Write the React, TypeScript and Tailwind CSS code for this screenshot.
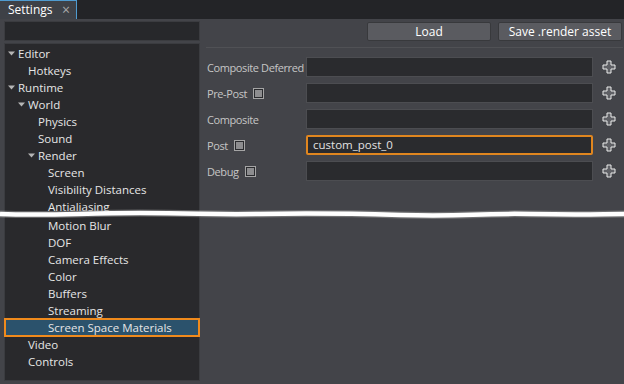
type TreeItem = { label: string; level: number; arrow?: boolean; selected?: boolean; gapBefore?: boolean };

const tree: TreeItem[] = [
  { label: 'Editor', level: 0, arrow: true },
  { label: 'Hotkeys', level: 1 },
  { label: 'Runtime', level: 0, arrow: true },
  { label: 'World', level: 1, arrow: true },
  { label: 'Physics', level: 2 },
  { label: 'Sound', level: 2 },
  { label: 'Render', level: 2, arrow: true },
  { label: 'Screen', level: 3 },
  { label: 'Visibility Distances', level: 3 },
  { label: 'Antialiasing', level: 3 },
  { label: 'Motion Blur', level: 3, gapBefore: true },
  { label: 'DOF', level: 3 },
  { label: 'Camera Effects', level: 3 },
  { label: 'Color', level: 3 },
  { label: 'Buffers', level: 3 },
  { label: 'Streaming', level: 3 },
  { label: 'Screen Space Materials', level: 3, selected: true },
  { label: 'Video', level: 1 },
  { label: 'Controls', level: 1 },
];

const indents = ['pl-[1px]', 'pl-[11px]', 'pl-[21px]', 'pl-[31px]'];

const rows = [
  { label: 'Composite Deferred', check: false, value: '' },
  { label: 'Pre-Post', check: true, value: '' },
  { label: 'Composite', check: false, value: '' },
  { label: 'Post', check: true, value: 'custom_post_0', active: true },
  { label: 'Debug', check: true, value: '' },
];

const Arrow = () => (
  <svg width="12" height="17" viewBox="0 0 12 17" className="shrink-0">
    <path d="M2 6.5 L9 6.5 L5.5 10.5 Z" fill="#b5b5b5" />
  </svg>
);

const Plus = () => (
  <svg width="14" height="14" viewBox="0 0 14 14">
    <path
      d="M5 1 H9 V5 H13 V9 H9 V13 H5 V9 H1 V5 H5 Z"
      fill="#5f6065"
      stroke="#ececec"
      strokeWidth="1"
    />
  </svg>
);

const Check = () => (
  <span className="inline-flex w-[11px] h-[11px] border border-[#a5a5a5] bg-[#2a2b2e] items-center justify-center">
    <span className="w-[7px] h-[7px] bg-[#8d8d8f]" />
  </span>
);

const App = () => {
  return (
    <div className="relative w-[624px] h-[384px] overflow-hidden bg-[#434449] font-['Open_Sans',sans-serif] text-[11.5px] leading-none">
      <div className="h-[19px] bg-[#232427] flex">
        <div className="w-[77px] h-[19px] bg-[#3e4147] border-t border-r border-[#4f9bd0] flex items-center pl-[8px] pr-[6px] justify-between">
          <span className="text-white text-[12px]">Settings</span>
          <span className="text-[#a8a8a8] text-[14px]">×</span>
        </div>
      </div>

      <div className="flex">
        <div className="w-[196px] ml-[4px] mt-[2px] shrink-0">
          <div className="h-[20px] bg-[#27282b] border border-[#3b3c40]" />
          <div className="mt-[2px] h-[338px] bg-[#29292c] border border-[#3b3c40] pt-[1px] text-[#e6e6e6]">
            {tree.map((t) => (
              <div
                key={t.label}
                className={`h-[17px] flex items-center ${t.gapBefore ? 'mt-[2px]' : ''} ${t.selected ? 'bg-[#2b526c] outline-2 outline-[#f08a1c] -outline-offset-1' : ''}`}
              >
                <div className={`flex items-center ${indents[t.level]}`}>
                  {t.arrow ? <Arrow /> : <span className="w-[12px] shrink-0" />}
                  <span>{t.label}</span>
                </div>
              </div>
            ))}
          </div>
        </div>

        <div className="flex-1 pl-[6px] pr-[4px] pt-[3px]">
          <div className="flex justify-end gap-[7px] pr-[1px]">
            <button className="w-[124px] h-[19px] bg-[#5a5b60] border border-[#38393c] rounded-[2px] text-white text-[12px]">Load</button>
            <button className="w-[124px] h-[19px] bg-[#5a5b60] border border-[#38393c] rounded-[2px] text-white text-[12px]">Save .render asset</button>
          </div>
          <div className="mt-[6px] h-px bg-[#505155]" />
          <div className="mt-[9px] flex flex-col gap-[6px]">
            {rows.map((r) => (
              <div key={r.label} className="flex items-center h-[20px]">
                <div className="w-[100px] shrink-0 flex items-center gap-[6px] pl-[1px] text-[#c6c6c6] text-[11px] tracking-[-0.4px] whitespace-nowrap">
                  <span>{r.label}</span>
                  {r.check && <Check />}
                </div>
                <div
                  className={`w-[287px] h-[20px] flex items-center pl-[5px] text-[#e2e2e2] bg-[#2a2b2e] ${r.active ? 'border-2 border-[#e0861f] rounded-[2px]' : 'border border-[#4c4d51]'}`}
                >
                  {r.value}
                </div>
                <div className="w-[30px] flex justify-center pl-[2px]">
                  <Plus />
                </div>
              </div>
            ))}
          </div>
        </div>
      </div>

      <svg className="absolute left-0 top-[204px]" width="624" height="20" viewBox="0 0 624 20">
        <path
          d="M0 10 C50 12 80 9 140 9 S210 11 260 10 S330 9 400 11 S470 9 530 10 S600 10 624 10"
          fill="none"
          stroke="#9a9a9a"
          strokeOpacity="0.5"
          strokeWidth="7"
        />
        <path
          d="M0 10 C50 12 80 9 140 9 S210 11 260 10 S330 9 400 11 S470 9 530 10 S600 10 624 10"
          fill="none"
          stroke="#ffffff"
          strokeWidth="4.5"
        />
      </svg>
    </div>
  );
};

export default App;
